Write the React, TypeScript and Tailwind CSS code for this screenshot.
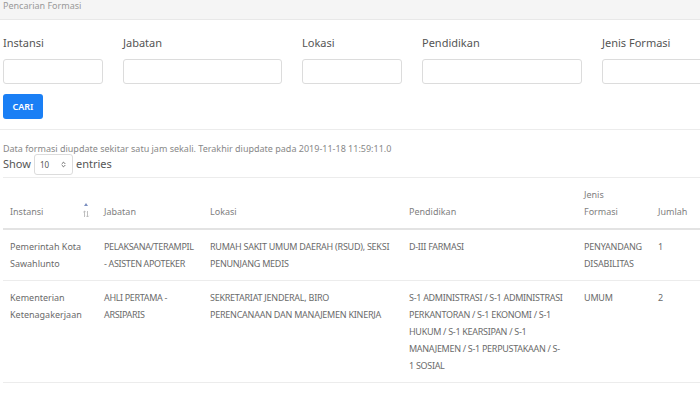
import { ChevronsUpDown } from 'lucide-react'

const fields = [
  { label: 'Instansi', w: 'w-[100px]' },
  { label: 'Jabatan', w: 'w-[159px]' },
  { label: 'Lokasi', w: 'w-[100px]' },
  { label: 'Pendidikan', w: 'w-[160px]' },
  { label: 'Jenis Formasi', w: 'w-[120px]' },
]

const rows = [
  {
    instansi: 'Pemerintah Kota Sawahlunto',
    jabatan: 'PELAKSANA/TERAMPIL - ASISTEN APOTEKER',
    lokasi: 'RUMAH SAKIT UMUM DAERAH (RSUD), SEKSI PENUNJANG MEDIS',
    pendidikan: 'D-III FARMASI',
    jenis: 'PENYANDANG DISABILITAS',
    jumlah: '1',
  },
  {
    instansi: 'Kementerian Ketenagakerjaan',
    jabatan: 'AHLI PERTAMA - ARSIPARIS',
    lokasi: 'SEKRETARIAT JENDERAL, BIRO PERENCANAAN DAN MANAJEMEN KINERJA',
    pendidikan:
      'S-1 ADMINISTRASI / S-1 ADMINISTRASI PERKANTORAN / S-1 EKONOMI / S-1 HUKUM / S-1 KEARSIPAN / S-1 MANAJEMEN / S-1 PERPUSTAKAAN / S-1 SOSIAL',
    jenis: 'UMUM',
    jumlah: '2',
  },
]

// sort indicator next to "Instansi"
function SortIcon() {
  return (
    <svg width="8" height="18" viewBox="0 0 8 18" fill="none">
      <path d="M4 1l2 3H2z" fill="#7b8fc0" />
      <path d="M2.5 9v6M1.3 10.2l1.2-1.2 1.2 1.2M5.5 9v6M4.3 13.8l1.2 1.2 1.2-1.2" stroke="#b8b8b8" strokeWidth="0.9" />
    </svg>
  )
}

export default function App() {
  return (
    <div className="w-[700px] h-[393px] overflow-hidden bg-white text-[#6b6b6b] font-['Noto_Sans',sans-serif]">
      {/* card header */}
      <div className="h-[20px] bg-[#f5f5f5] border-b border-[#e8e8e8] px-[3px] text-[9px] leading-[12px] text-[#999]">
        Pencarian Formasi
      </div>

      {/* form */}
      <div className="px-[3px] pt-[16px]">
        <div className="flex gap-[20px]">
          {fields.map(f => (
            <div key={f.label} className={`${f.w} shrink-0`}>
              <div className="text-[11px] leading-[14px] text-[#555] mb-[9px]">{f.label}</div>
              <div className="h-[25px] rounded-[3px] border border-[#dcdcdc] bg-white" />
            </div>
          ))}
        </div>
        <button className="mt-[10px] h-[25px] w-[40px] rounded-[3px] bg-[#1a7ff5] text-white text-[9px] font-semibold">
          CARI
        </button>
      </div>
      <div className="mt-[10px] border-b border-[#ececec]" />

      {/* info + show entries */}
      <div className="px-[3px] pt-[12px]">
        <div className="text-[9px] leading-[14px] text-[#888]">
          Data formasi diupdate sekitar satu jam sekali. Terakhir diupdate pada 2019-11-18 11:59:11.0
        </div>
        <div className="flex items-center gap-[3px] text-[11px] text-[#555] mt-[-2px]">
          <span>Show</span>
          <div className="h-[21px] w-[39px] rounded-[3px] border border-[#dcdcdc] flex items-center justify-between px-[5px] text-[8px] text-[#555]">
            <span>10</span>
            <ChevronsUpDown size={7} strokeWidth={3} />
          </div>
          <span>entries</span>
        </div>
      </div>

      {/* table */}
      <div className="px-[3px] mt-[2px]">
        <table className="w-[697px] border-collapse text-[9px] leading-[17px] table-fixed">
          <colgroup>
            <col className="w-[94px]" />
            <col className="w-[106px]" />
            <col className="w-[199px]" />
            <col className="w-[175px]" />
            <col className="w-[74px]" />
            <col className="w-[49px]" />
          </colgroup>
          <thead>
            <tr className="border-t border-[#ececec] border-b-2 border-b-[#e3e3e3] text-[#808080]">
              <th className="font-normal text-left align-bottom px-[7px] py-[8px]">
                <div className="flex items-end justify-between">
                  <span>Instansi</span>
                  <SortIcon />
                </div>
              </th>
              <th className="font-normal text-left align-bottom px-[7px] py-[8px]">Jabatan</th>
              <th className="font-normal text-left align-bottom px-[7px] py-[8px]">Lokasi</th>
              <th className="font-normal text-left align-bottom px-[7px] py-[8px]">Pendidikan</th>
              <th className="font-normal text-left align-bottom px-[7px] py-[8px]">
                Jenis
                <br />
                Formasi
              </th>
              <th className="font-normal text-left align-bottom px-[7px] py-[8px]">Jumlah</th>
            </tr>
          </thead>
          <tbody>
            {rows.map(r => (
              <tr key={r.instansi} className="border-b border-[#ececec] align-top">
                <td className="px-[7px] py-[8px]">{r.instansi}</td>
                <td className="px-[7px] py-[8px] tracking-[-0.35px]">{r.jabatan}</td>
                <td className="pl-[7px] pr-[10px] py-[8px] tracking-[-0.25px]">{r.lokasi}</td>
                <td className="pl-[7px] pr-[13px] py-[8px] tracking-[-0.3px]">{r.pendidikan}</td>
                <td className="px-[7px] py-[8px] tracking-[-0.2px]">{r.jenis}</td>
                <td className="px-[7px] py-[8px]">{r.jumlah}</td>
              </tr>
            ))}
          </tbody>
        </table>
      </div>
    </div>
  )
}
